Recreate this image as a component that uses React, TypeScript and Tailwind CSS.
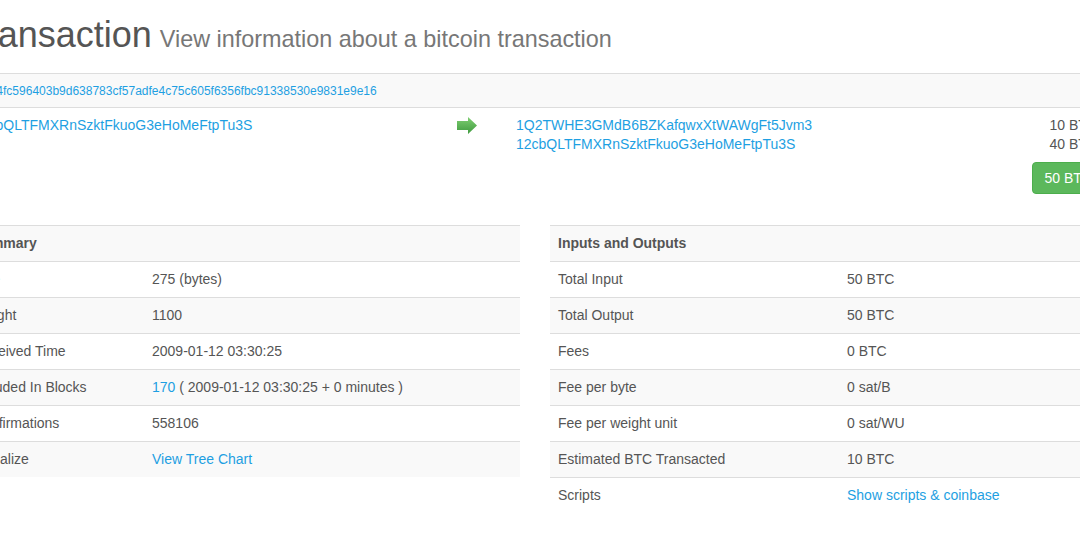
import React from "react";

const summaryRows: { label: string; value: React.ReactNode }[] = [
  { label: "Size", value: "275 (bytes)" },
  { label: "Weight", value: "1100" },
  { label: "Received Time", value: "2009-01-12 03:30:25" },
  {
    label: "Included In Blocks",
    value: (
      <>
        <a className="text-[#1e9fe2]">170</a> ( 2009-01-12 03:30:25 + 0 minutes )
      </>
    ),
  },
  { label: "Confirmations", value: "558106" },
  { label: "Visualize", value: <a className="text-[#1e9fe2]">View Tree Chart</a> },
];

const ioRows: { label: string; value: React.ReactNode }[] = [
  { label: "Total Input", value: "50 BTC" },
  { label: "Total Output", value: "50 BTC" },
  { label: "Fees", value: "0 BTC" },
  { label: "Fee per byte", value: "0 sat/B" },
  { label: "Fee per weight unit", value: "0 sat/WU" },
  { label: "Estimated BTC Transacted", value: "10 BTC" },
  { label: "Scripts", value: <a className="text-[#1e9fe2]">Show scripts &amp; coinbase</a> },
];

function InfoTable({
  title,
  rows,
  labelWidth,
}: {
  title: string;
  rows: { label: string; value: React.ReactNode }[];
  labelWidth: string;
}) {
  return (
    <div>
      <div className="flex h-[36px] items-center border-t border-[#ddd] bg-[#f9f9f9] px-2 font-bold">
        {title}
      </div>
      {rows.map((r, i) => (
        <div
          key={r.label}
          className={`flex h-[36px] items-center border-t border-[#ddd] whitespace-nowrap ${
            i % 2 === 1 ? "bg-[#f9f9f9]" : "bg-white"
          }`}
        >
          <div className={`${labelWidth} flex-none px-2`}>{r.label}</div>
          <div className="px-2">{r.value}</div>
        </div>
      ))}
    </div>
  );
}

function Arrow() {
  return (
    <svg width="20" height="17" viewBox="0 0 20 17" className="mt-[1px] flex-none">
      <defs>
        <linearGradient id="ag" x1="0" y1="0" x2="0" y2="1">
          <stop offset="0" stopColor="#7fcf72" />
          <stop offset="1" stopColor="#3f9a3f" />
        </linearGradient>
      </defs>
      <path d="M0 4h11V0l9 8.5L11 17v-4H0z" fill="url(#ag)" />
    </svg>
  );
}

export default function App() {
  return (
    <div className="min-h-screen overflow-hidden bg-white font-['Liberation_Sans',Arial,sans-serif] text-[14px] text-[#555]">
      <div className="ml-[-35px] w-[1140px] pt-[15px]">
        <h1 className="mb-[14px] whitespace-nowrap text-[36px] leading-[40px] text-[#555]">
          Transaction <small className="ml-[-2px] text-[23.4px] text-[#777]">View information about a bitcoin transaction</small>
        </h1>

        <div className="border-t border-[#ddd]">
          <div className="flex h-[33px] items-center bg-[#f9f9f9] px-2 text-[12px] text-[#1e9fe2]">
            f4184fc596403b9d638783cf57adfe4c75c605f6356fbc91338530e9831e9e16
          </div>
          <div className="flex border-t border-[#ddd] px-2 pb-2 pt-2 leading-[19px]">
            <div className="w-[484px] flex-none text-[#1e9fe2]">12cbQLTFMXRnSzktFkuoG3eHoMeFtpTu3S</div>
            <Arrow />
            <div className="ml-[39px] flex-1">
              <div className="flex justify-between">
                <a className="text-[#1e9fe2]">1Q2TWHE3GMdB6BZKafqwxXtWAWgFt5Jvm3</a>
                <span>10 BTC</span>
              </div>
              <div className="flex justify-between">
                <a className="text-[#1e9fe2]">12cbQLTFMXRnSzktFkuoG3eHoMeFtpTu3S</a>
                <span>40 BTC</span>
              </div>
              <div className="mr-[-8px] mt-2 flex justify-end">
                <button className="rounded-[4px] border border-[#4cae4c] bg-[#5cb85c] px-3 py-[5px] leading-[20px] text-white">
                  50 BTC
                </button>
              </div>
            </div>
          </div>
        </div>

        <div className="mt-[23px] grid grid-cols-2 gap-x-[30px]">
          <InfoTable title="Summary" rows={summaryRows} labelWidth="w-[179px]" />
          <InfoTable title="Inputs and Outputs" rows={ioRows} labelWidth="w-[289px]" />
        </div>
      </div>
    </div>
  );
}
